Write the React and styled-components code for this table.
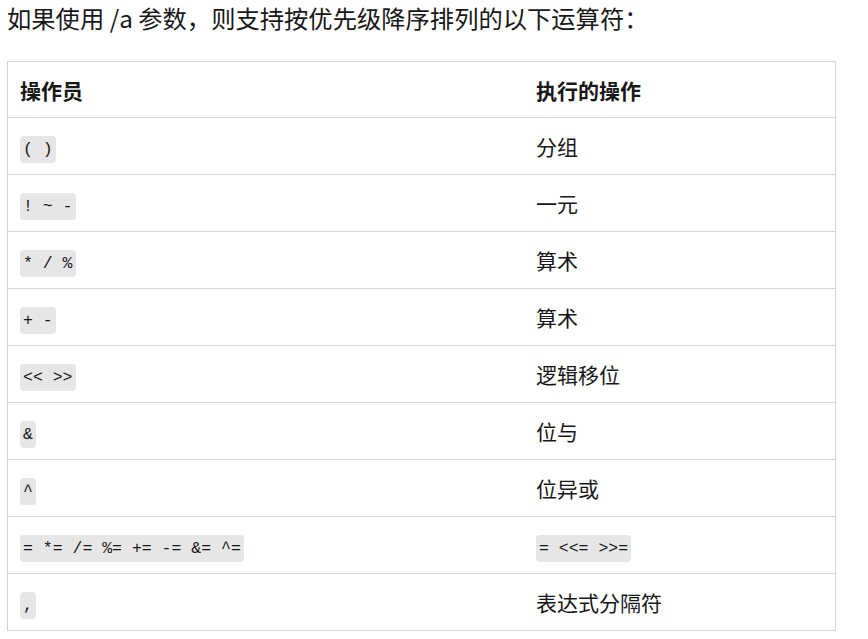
import React from "react";
import styled, { createGlobalStyle } from "styled-components";

const GlobalStyle = createGlobalStyle`
  body {
    margin: 0;
    background: #fff;
    font-family: "Noto Sans CJK SC", "Noto Sans", sans-serif;
    color: #171717;
  }
`;

const Page = styled.div`
  padding: 0 7px;
  width: 829px;
`;

const Intro = styled.p`
  margin: 0 0 25px 0;
  font-size: 24.3px;
  line-height: 36px;
`;

const Table = styled.table`
  width: 100%;
  border-collapse: collapse;
  border: 1px solid #d4d4d4;
  font-size: 21px;
`;

const Head = styled.th`
  text-align: left;
  font-weight: 700;
  padding: 0 12px;
  height: 55px;
  width: ${p => p.$width || "auto"};
  border-bottom: 1px solid #d4d4d4;
`;

const Cell = styled.td`
  padding: 0 12px;
  height: 56px;
  border-bottom: 1px solid #d4d4d4;
  vertical-align: middle;
`;

const Code = styled.code`
  display: inline-block;
  font-family: "Liberation Mono", "DejaVu Sans Mono", monospace;
  font-size: 16.5px;
  line-height: 27px;
  padding: 0 3px;
  background: #e6e6e6;
  border-radius: 4px;
  color: #171717;
  white-space: pre;
`;

const rows = [
  ["( )", "分组"],
  ["! ~ -", "一元"],
  ["* / %", "算术"],
  ["+ -", "算术"],
  ["<< >>", "逻辑移位"],
  ["&", "位与"],
  ["^", "位异或"],
  ["= *= /= %= += -= &= ^=", { code: "= <<= >>=" }],
  [",", "表达式分隔符"],
];

export default function App() {
  return (
    <Page>
      <GlobalStyle />
      <Intro>如果使用 /a 参数，则支持按优先级降序排列的以下运算符：</Intro>
      <Table>
        <thead>
          <tr>
            <Head $width="492px">操作员</Head>
            <Head>执行的操作</Head>
          </tr>
        </thead>
        <tbody>
          {rows.map(([op, action], i) => (
            <tr key={i}>
              <Cell><Code>{op}</Code></Cell>
              <Cell>{typeof action === "string" ? action : <Code>{action.code}</Code>}</Cell>
            </tr>
          ))}
        </tbody>
      </Table>
    </Page>
  );
}
